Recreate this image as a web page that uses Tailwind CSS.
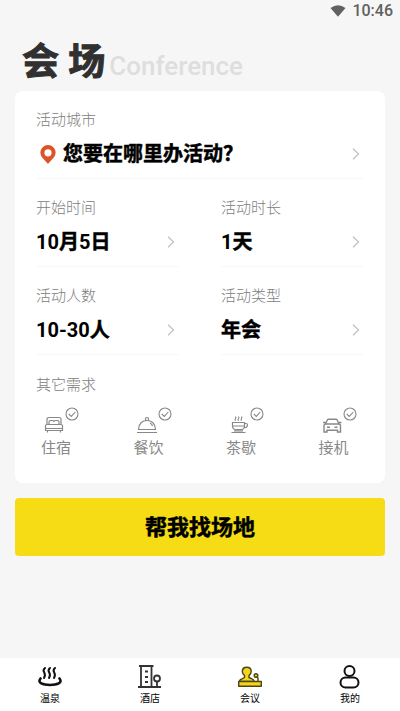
<!DOCTYPE html>
<html lang="zh-CN">
<head>
<meta charset="utf-8">
<meta name="viewport" content="width=device-width, initial-scale=1">
<title>会场</title>
<script src="https://cdn.jsdelivr.net/npm/@tailwindcss/browser@4"></script>
</head>
<body class="flex min-h-screen flex-col bg-[#f6f6f6] font-['Roboto','Noto_Sans_CJK_SC',sans-serif] text-black">
<svg class="hidden" aria-hidden="true">
  <symbol id="chevron" viewBox="0 0 8 12"><path d="M1 .7 6.6 6 1 11.3" fill="none" stroke="currentColor" stroke-width="1.2"/></symbol>
  <symbol id="check" viewBox="0 0 14 14"><g fill="none" stroke="currentColor" stroke-width="1.1"><circle cx="7" cy="7" r="6"/><path d="m3.8 7 2.500 2.400 4-4.400"/></g></symbol>
</svg>

<header>
  <div class="flex h-[22px] items-center justify-end gap-1.5 pr-[7px] text-[#616161]">
    <svg class="h-[12px] w-[16px]" viewBox="0 0 16 12" aria-hidden="true"><path d="M.5 3Q8-2.400 15.500 3L8 11.700Z" fill="currentColor"/></svg>
    <time class="text-[16px] leading-[22px] font-medium">10:46</time>
  </div>
  <h1 class="flex h-[69px] items-baseline pl-[22px] text-[#303030]">
    <span class="text-[37px] leading-[82px] font-bold [-webkit-text-stroke:1px]">会 场</span>
    <span class="ml-1 text-[26px] font-medium text-[#dedede]">Conference</span>
  </h1>
</header>

<main class="flex-1 px-[15px] pb-6">
  <form>
    <div class="rounded-lg bg-white">
      <div class="grid grid-cols-2 gap-x-[42px] px-[21px]">
        <div class="col-span-2 border-b border-[#f8f8f8] pt-[19px] pb-[10px]">
          <div id="l-city" class="text-[15px] leading-5 font-light text-[#808080]">活动城市</div>
          <button type="button" aria-labelledby="l-city v-city" class="mt-2.5 flex w-full items-center pr-1 text-left text-[20px] leading-7 font-bold">
            <svg class="mr-[7px] ml-1 h-[19px] w-4 shrink-0" viewBox="0 0 16 19" aria-hidden="true"><path fill="#dd5227" fill-rule="evenodd" d="M8 0a7.600 7.600 0 0 0-7.600 7.600C.4 12.600 5 15 8 19c3-4 7.600-6.400 7.600-11.400A7.600 7.600 0 0 0 8 0Zm0 4.200a3.600 3.600 0 1 1 0 7.200 3.600 3.600 0 0 1 0-7.200Z"/></svg>
            <span id="v-city" class="flex-1 [-webkit-text-stroke:0.5px]">您要在哪里办活动？</span>
            <svg class="h-3 w-2 text-[#c0c0c0]" aria-hidden="true"><use href="#chevron"/></svg>
          </button>
        </div>
        <div class="border-b border-[#f8f8f8] pt-[19px] pb-[10px]">
          <div id="l-start" class="text-[15px] leading-5 font-light text-[#808080]">开始时间</div>
          <button type="button" aria-labelledby="l-start v-start" class="mt-2.5 flex w-full items-center pr-1 text-left text-[20px] leading-7 font-bold">
            <span id="v-start" class="flex-1">10<span class="[-webkit-text-stroke:0.5px]">月</span>5<span class="[-webkit-text-stroke:0.5px]">日</span></span>
            <svg class="h-3 w-2 text-[#c0c0c0]" aria-hidden="true"><use href="#chevron"/></svg>
          </button>
        </div>
        <div class="border-b border-[#f8f8f8] pt-[19px] pb-[10px]">
          <div id="l-length" class="text-[15px] leading-5 font-light text-[#808080]">活动时长</div>
          <button type="button" aria-labelledby="l-length v-length" class="mt-2.5 flex w-full items-center pr-1 text-left text-[20px] leading-7 font-bold">
            <span id="v-length" class="flex-1">1<span class="[-webkit-text-stroke:0.5px]">天</span></span>
            <svg class="h-3 w-2 text-[#c0c0c0]" aria-hidden="true"><use href="#chevron"/></svg>
          </button>
        </div>
        <div class="border-b border-[#f8f8f8] pt-[19px] pb-[10px]">
          <div id="l-people" class="text-[15px] leading-5 font-light text-[#808080]">活动人数</div>
          <button type="button" aria-labelledby="l-people v-people" class="mt-2.5 flex w-full items-center pr-1 text-left text-[20px] leading-7 font-bold">
            <span id="v-people" class="flex-1">10-30<span class="[-webkit-text-stroke:0.5px]">人</span></span>
            <svg class="h-3 w-2 text-[#c0c0c0]" aria-hidden="true"><use href="#chevron"/></svg>
          </button>
        </div>
        <div class="border-b border-[#f8f8f8] pt-[19px] pb-[10px]">
          <div id="l-type" class="text-[15px] leading-5 font-light text-[#808080]">活动类型</div>
          <button type="button" aria-labelledby="l-type v-type" class="mt-2.5 flex w-full items-center pr-1 text-left text-[20px] leading-7 font-bold">
            <span id="v-type" class="flex-1 [-webkit-text-stroke:0.5px]">年会</span>
            <svg class="h-3 w-2 text-[#c0c0c0]" aria-hidden="true"><use href="#chevron"/></svg>
          </button>
        </div>
      </div>

      <fieldset class="pt-5 pb-[25px]">
        <legend class="contents"><span class="block px-[21px] text-[15px] leading-5 font-light text-[#808080]">其它需求</span></legend>
        <div class="mt-3 grid grid-cols-4 text-[#888888]">
          <label class="pl-[26px]">
            <span class="flex h-[27px] items-end pl-[3px]">
              <svg class="h-5 w-5" viewBox="0 0 20 20" fill="none" stroke="currentColor" stroke-width="1.200" aria-hidden="true"><path d="M3 10V5.500Q3 3.500 5 3.500H15Q17 3.500 17 5.500V10M5 10V8Q5 6.500 6.500 6.500H8.500Q10 6.500 10 8 10 6.500 11.500 6.500H13.500Q15 6.500 15 8V10M1.500 16.500V12Q1.500 10.500 3 10.500H17Q18.500 10.500 18.500 12V16.500ZM3.500 16.500V18.500M16.500 16.500V18.500M1.500 14.500H18.500"/></svg>
              <span class="ml-px grid size-[14px] self-start">
                <input type="checkbox" class="col-start-1 row-start-1 size-[14px] appearance-none rounded-full">
                <svg class="pointer-events-none col-start-1 row-start-1 size-[14px]" aria-hidden="true"><use href="#check"/></svg>
              </span>
            </span>
            <span class="mt-1 block text-[15px] leading-5">住宿</span>
          </label>
          <label class="pl-[26px]">
            <span class="flex h-[27px] items-end pl-[3px]">
              <svg class="h-5 w-5" viewBox="0 0 20 20" fill="none" stroke="currentColor" stroke-width="1.200" aria-hidden="true"><path d="M1.500 15.500C1.500 9.500 5.500 6.500 10 6.500S18.500 9.500 18.500 15.500ZM8.500 6.500V4.500Q8.500 3.500 10 3.500T11.500 4.500V6.500M13 9Q15 10 15.500 12M0 18.500H20"/></svg>
              <span class="ml-px grid size-[14px] self-start">
                <input type="checkbox" class="col-start-1 row-start-1 size-[14px] appearance-none rounded-full">
                <svg class="pointer-events-none col-start-1 row-start-1 size-[14px]" aria-hidden="true"><use href="#check"/></svg>
              </span>
            </span>
            <span class="mt-1 block text-[15px] leading-5">餐饮</span>
          </label>
          <label class="pl-[26px]">
            <span class="flex h-[27px] items-end pl-[3px]">
              <svg class="h-5 w-5" viewBox="0 0 20 20" fill="none" stroke="currentColor" stroke-width="1.200" aria-hidden="true"><path d="M3.500 8.500H15.500V12Q15.500 15.500 12 15.500H7Q3.500 15.500 3.500 12ZM15.500 9.500H17Q18.500 9.500 18.500 11T17 13.500H15.500M2.500 18.500H16.500M5 16.800H14M6.500 6.800Q5.700 5.500 6.500 4.500T6.500 2.500M9.500 6.800Q8.700 5.500 9.500 4.500T9.500 2.500M12.500 6.800Q11.700 5.500 12.500 4.500T12.500 2.500M4 12H15"/></svg>
              <span class="ml-px grid size-[14px] self-start">
                <input type="checkbox" class="col-start-1 row-start-1 size-[14px] appearance-none rounded-full">
                <svg class="pointer-events-none col-start-1 row-start-1 size-[14px]" aria-hidden="true"><use href="#check"/></svg>
              </span>
            </span>
            <span class="mt-1 block text-[15px] leading-5">茶歇</span>
          </label>
          <label class="pl-[26px]">
            <span class="flex h-[27px] items-end pl-[3px]">
              <svg class="h-5 w-5" viewBox="0 0 20 20" fill="none" stroke="currentColor" stroke-width="1.400" aria-hidden="true"><path d="M3.500 10 5.300 6Q5.700 5.200 6.500 5.200H14Q14.800 5.200 15.200 6L17 10M1 8.500H3.500M17 8.500H19.500M2 18V12Q2 10 4 10H16.500Q18.500 10 18.500 12V18H15.500V16.200H5V18ZM5 13.200H8M12.500 13.200H15.500"/></svg>
              <span class="ml-px grid size-[14px] self-start">
                <input type="checkbox" class="col-start-1 row-start-1 size-[14px] appearance-none rounded-full">
                <svg class="pointer-events-none col-start-1 row-start-1 size-[14px]" aria-hidden="true"><use href="#check"/></svg>
              </span>
            </span>
            <span class="mt-1 block text-[15px] leading-5">接机</span>
          </label>
        </div>
      </fieldset>
    </div>
    <button type="submit" class="mt-[15px] block w-full rounded bg-[#f6dc14] pt-[15px] pb-[13px] text-[22px] leading-[30px] font-bold [-webkit-text-stroke:0.5px]">帮我找场地</button>
  </form>
</main>

<nav class="grid h-[53px] grid-cols-4 bg-white text-[10px] leading-[14px]">
  <a href="#spring" class="flex flex-col items-center pt-1.5">
    <svg class="h-[26px] w-6" viewBox="0 0 24 26" fill="none" stroke="#111" stroke-linecap="round" aria-hidden="true"><path stroke-width="2" d="M7 4Q4.600 6 6.200 8.500T6 14M12 4Q9.600 6 11.200 8.500T11 14M17 4Q14.600 6 16.200 8.500T16 14"/><path stroke-width="2.600" d="M2.500 14.500C-1 19 5 21 12 21S25 19 21.500 14.500"/></svg>
    <span class="mt-[2px]">温泉</span>
  </a>
  <a href="#hotel" class="flex flex-col items-center pt-1.5">
    <svg class="h-[26px] w-6" viewBox="0 0 24 26" fill="none" stroke="#333" stroke-width="1.800" aria-hidden="true"><path d="M1 2H15.500M3 2V23M13.500 2V23M0 23H23M7 7.500H10M7 13H10M7 18H10M19 17.500V23"/><circle cx="19" cy="14.500" r="3"/></svg>
    <span class="mt-[2px]">酒店</span>
  </a>
  <a href="#meeting" aria-current="page" class="flex flex-col items-center pt-1.5">
    <svg class="h-[26px] w-6" viewBox="0 0 24 26" fill="#f2d51c" stroke="#4d4518" stroke-width="1.400" stroke-linejoin="round" aria-hidden="true"><path d="M1.500 17.500Q1.500 15.500 4 14.800L6.500 13.500V11.500Q4.300 9.500 4.300 7.500C4.300 1.900 13.200 1.900 13.200 7.500Q13.200 9.500 11 11.500V13.500L14 14.800Q16 15.500 16.200 17.500Z"/><path d="M.7 17.500H23.300V22.300H.7ZM20 17.500V14L18.800 12.800"/><circle cx="18" cy="11.500" r="1.800"/></svg>
    <span class="mt-[2px]">会议</span>
  </a>
  <a href="#mine" class="flex flex-col items-center pt-1.5">
    <svg class="h-[26px] w-6" viewBox="0 0 24 26" fill="none" stroke="#111" stroke-width="2" aria-hidden="true"><circle cx="11.500" cy="7" r="5"/><rect x="2.500" y="13.500" width="18" height="10" rx="5"/></svg>
    <span class="mt-[2px]">我的</span>
  </a>
</nav>
</body>
</html>
